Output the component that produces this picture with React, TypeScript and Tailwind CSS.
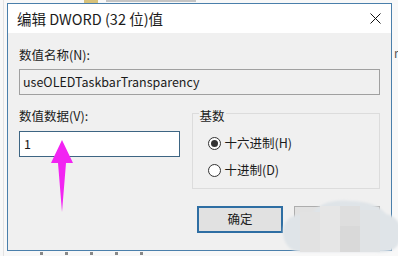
export default function App() {
  return (
    <div className="relative w-[398px] h-[256px] overflow-hidden bg-[#f8f8f8] font-['Noto_Sans_CJK_SC',sans-serif] text-[#1b1b1b]">
      {/* registry editor behind the dialog (only slivers show) */}
      <div className="absolute left-[84px] top-0 flex items-start gap-[8px]">
        <span className="w-[14px] h-[3px] bg-[#d8c27a]" />
        <span className="w-[90px] h-[2px] bg-[#c4c4c4]" />
      </div>
      <div className="absolute left-[3px] top-0 h-[256px] w-px bg-[#e2e2e2]" />
      <div className="absolute left-[394px] top-[44px] text-[12px] text-[#555]">r</div>
      <div className="absolute left-[40px] top-[252px] flex gap-[22px]">
        {[0, 1, 2, 3, 4].map((i) => (
          <span key={i} className="w-[3px] h-[3px] bg-[#888]" />
        ))}
      </div>

      {/* dialog window */}
      <div className="absolute left-[7px] top-[3px] w-[385px] h-[248px] border border-[#4a7fab] bg-[#f0f0f0] flex flex-col">
        <div className="h-[29px] bg-white flex items-center justify-between pl-[9px] pr-[10px] shrink-0">
          <span className="text-[14.5px]">编辑 DWORD (32 位)值</span>
          <svg width="11" height="11" viewBox="0 0 11 11">
            <path d="M0.5 0.5 L10.5 10.5 M10.5 0.5 L0.5 10.5" stroke="#111" strokeWidth="1" />
          </svg>
        </div>

        <div className="flex flex-col px-[11px] pt-[14px] text-[12.5px]">
          <div className="h-[16px] leading-[16px]">数值名称(N):</div>
          <div className="mt-[6px] h-[26px] border border-[#a0a0a0] bg-[#f0f0f0] flex items-center pl-[3px]">
            useOLEDTaskbarTransparency
          </div>

          <div className="flex gap-[12px] mt-[13px]">
            <div className="w-[161px] flex flex-col">
              <div className="h-[16px] leading-[16px]">数值数据(V):</div>
              <div className="mt-[7px] h-[26px] border border-[#3d6583] bg-white flex items-center pl-[4px]">
                1
              </div>
            </div>

            <div className="relative mt-[5px] w-[189px] h-[76px] border border-[#dcdcdc] flex flex-col pl-[15px] pt-[23px] gap-[14px]">
              <span className="absolute left-[6px] top-[-6px] px-px bg-[#f0f0f0] leading-[16px]">基数</span>
              <div className="flex items-center gap-[4px] h-[13px]">
                <span className="w-[13px] h-[13px] rounded-full border border-[#333] bg-white flex items-center justify-center">
                  <span className="w-[7px] h-[7px] rounded-full bg-[#333]" />
                </span>
                <span>十六进制(H)</span>
              </div>
              <div className="flex items-center gap-[4px] h-[13px]">
                <span className="w-[13px] h-[13px] rounded-full border border-[#333] bg-white" />
                <span>十进制(D)</span>
              </div>
            </div>
          </div>

          <div className="flex justify-end gap-[11px] mt-[17px]">
            <div className="w-[86px] h-[27px] border-2 border-[#2e6ea3] bg-[#e1e1e1] flex items-center justify-center">
              确定
            </div>
            <div className="w-[86px] h-[27px] border border-[#adadad] bg-[#e1e1e1] flex items-center justify-center">
              取消
            </div>
          </div>
        </div>
      </div>

      {/* magenta arrow annotation */}
      <svg className="absolute left-0 top-0" width="398" height="256">
        <polygon points="62,140 73,163 66,163 62,212 58,163 51,163" fill="#f224f2" />
      </svg>

      {/* blurred mosaic blob over cancel button */}
      <svg className="absolute left-0 top-0" width="398" height="256">
        <defs>
          <filter id="soft" x="-10%" y="-10%" width="120%" height="120%">
            <feGaussianBlur stdDeviation="1.2" />
          </filter>
        </defs>
        <path
          d="M283 232 C283 218 296 212 312 214 C318 204 332 199 350 201 C368 201 380 206 386 214 C398 216 404 228 400 240 C398 250 388 253 376 252 L300 252 C290 251 283 243 283 232 Z"
          fill="#dfe4e8"
          filter="url(#soft)"
        />
        <rect x="300" y="212" width="20" height="40" fill="#e2e2e2" />
        <rect x="320" y="206" width="20" height="46" fill="#e6e6e6" />
        <rect x="340" y="206" width="20" height="20" fill="#dedede" />
        <rect x="340" y="226" width="20" height="26" fill="#d9d9d9" />
        <rect x="360" y="210" width="20" height="42" fill="#e0e3e5" />
      </svg>
    </div>
  );
}
